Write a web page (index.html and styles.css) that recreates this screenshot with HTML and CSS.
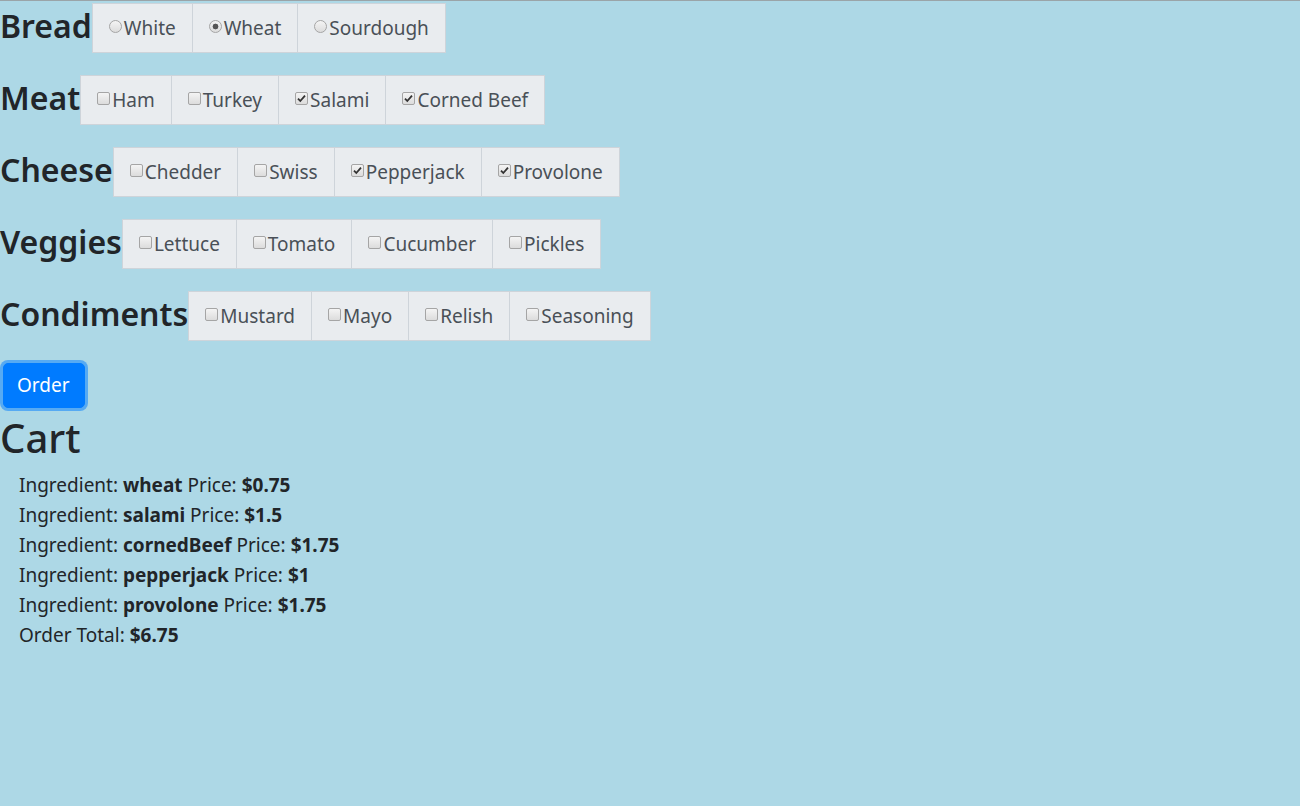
FILE: index.html
```html
<!DOCTYPE html>
<html>
<head>
<meta charset="utf-8">
<link rel="stylesheet" href="styles.css">
</head>
<body>
<div class="builder">
  <div class="row">
    <h2 class="cat">Bread</h2>
    <div class="group">
      <label class="opt"><input type="radio" name="bread">White</label>
      <label class="opt"><input type="radio" name="bread" checked>Wheat</label>
      <label class="opt"><input type="radio" name="bread">Sourdough</label>
    </div>
  </div>
  <div class="row">
    <h2 class="cat">Meat</h2>
    <div class="group">
      <label class="opt"><input type="checkbox">Ham</label>
      <label class="opt"><input type="checkbox">Turkey</label>
      <label class="opt"><input type="checkbox" checked>Salami</label>
      <label class="opt"><input type="checkbox" checked>Corned Beef</label>
    </div>
  </div>
  <div class="row">
    <h2 class="cat">Cheese</h2>
    <div class="group">
      <label class="opt"><input type="checkbox">Chedder</label>
      <label class="opt"><input type="checkbox">Swiss</label>
      <label class="opt"><input type="checkbox" checked>Pepperjack</label>
      <label class="opt"><input type="checkbox" checked>Provolone</label>
    </div>
  </div>
  <div class="row">
    <h2 class="cat">Veggies</h2>
    <div class="group">
      <label class="opt"><input type="checkbox">Lettuce</label>
      <label class="opt"><input type="checkbox">Tomato</label>
      <label class="opt"><input type="checkbox">Cucumber</label>
      <label class="opt"><input type="checkbox">Pickles</label>
    </div>
  </div>
  <div class="row">
    <h2 class="cat">Condiments</h2>
    <div class="group">
      <label class="opt"><input type="checkbox">Mustard</label>
      <label class="opt"><input type="checkbox">Mayo</label>
      <label class="opt"><input type="checkbox">Relish</label>
      <label class="opt"><input type="checkbox">Seasoning</label>
    </div>
  </div>
  <div class="actions"><button class="btn-order" type="button">Order</button></div>
</div>
<h1 class="cart-title">Cart</h1>
<ul class="cart">
  <li>Ingredient: <b>wheat</b> Price: <b>$0.75</b></li>
  <li>Ingredient: <b>salami</b> Price: <b>$1.5</b></li>
  <li>Ingredient: <b>cornedBeef</b> Price: <b>$1.75</b></li>
  <li>Ingredient: <b>pepperjack</b> Price: <b>$1</b></li>
  <li>Ingredient: <b>provolone</b> Price: <b>$1.75</b></li>
  <li>Order Total: <b>$6.75</b></li>
</ul>
</body>
</html>
```
FILE: styles.css
```css
html, body {
  margin: 0;
  padding: 0;
}
body {
  background: #add8e6;
  color: #212529;
  font-family: "Noto Sans", "Open Sans", sans-serif;
  border-top: 1px solid #9aa4a8;
  padding-top: 2px;
  min-height: 806px;
  box-sizing: border-box;
}
.row {
  display: flex;
  align-items: flex-start;
  margin-bottom: 22px;
}
.cat {
  font-size: 32px;
  font-weight: 600;
  line-height: 38px;
  margin: 4px 0 0 0;
}
.group {
  display: flex;
}
.opt {
  display: flex;
  align-items: center;
  box-sizing: border-box;
  height: 50px;
  padding: 0 16px;
  background: #e9ecef;
  border: 1px solid #ced4da;
  color: #495057;
  font-size: 19px;
  margin-left: -1px;
}
.opt:first-child {
  margin-left: 0;
}
.opt input {
  appearance: none;
  -webkit-appearance: none;
  width: 13px;
  height: 13px;
  margin: -4px 2px 0 0;
  border: 1px solid #a5a5a5;
  background: linear-gradient(#f4f4f4, #dcdcdc);
  box-sizing: border-box;
  flex: none;
}
.opt input[type="checkbox"] {
  border-radius: 2px;
}
.opt input[type="radio"] {
  border-radius: 50%;
}
.opt input[type="checkbox"]:checked {
  background: url("data:image/svg+xml;utf8,<svg xmlns='http://www.w3.org/2000/svg' viewBox='0 0 11 11'><path d='M2 5.6 L4.3 8 L9 2.6' fill='none' stroke='%23333' stroke-width='1.8'/></svg>") center/11px 11px no-repeat, linear-gradient(#f4f4f4, #dcdcdc);
}
.opt input[type="radio"]:checked {
  background: radial-gradient(circle, #555 0, #555 2.6px, transparent 3.2px), linear-gradient(#f4f4f4, #dcdcdc);
}
.actions {
  padding: 0 3px;
  margin-top: 0;
}
.btn-order {
  font-family: inherit;
  font-size: 19px;
  line-height: 29px;
  color: #fff;
  background: #007bff;
  border: 1px solid #007bff;
  border-radius: 5px;
  padding: 7px 14px 7px 13px;
  box-shadow: 0 0 0 3px rgba(0, 123, 255, 0.5);
}
.cart-title {
  font-size: 40px;
  font-weight: 500;
  line-height: 48px;
  margin: 6px 0 8px 0;
}
.cart {
  list-style: none;
  margin: 0;
  padding: 0 0 0 19px;
  font-size: 19px;
  line-height: 30px;
}
.cart b {
  font-weight: 700;
}
```
